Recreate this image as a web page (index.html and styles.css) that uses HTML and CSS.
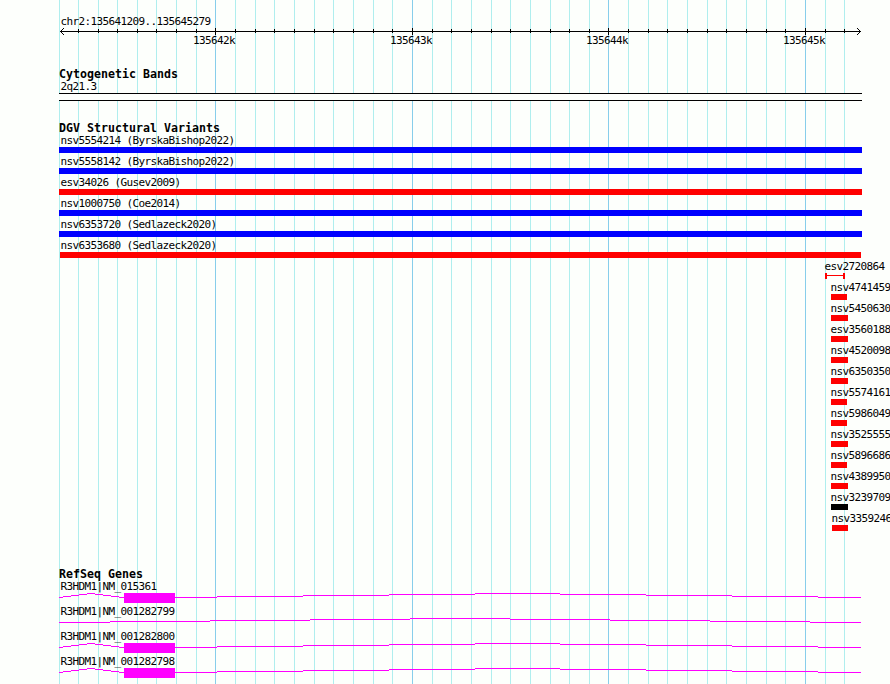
FILE: index.html
```html
<!DOCTYPE html>
<html lang="en">
<head>
    <meta charset="UTF-8">
    <title>chr2:135641209..135645279</title>
    <link rel="stylesheet" href="styles.css">
</head>
<body>
    <div class="panel">
        <!-- grid lines -->
        <svg class="grid" width="890" height="684" shape-rendering="crispEdges">
            <path class="minor" d="M59.5 0v684M78.5 0v684M98.5 0v684M117.5 0v684M137.5 0v684M156.5 0v684M176.5 0v684M196.5 0v684M235.5 0v684M255.5 0v684M274.5 0v684M294.5 0v684M314.5 0v684M333.5 0v684M353.5 0v684M373.5 0v684M392.5 0v684M432.5 0v684M451.5 0v684M471.5 0v684M491.5 0v684M510.5 0v684M530.5 0v684M550.5 0v684M569.5 0v684M589.5 0v684M628.5 0v684M648.5 0v684M667.5 0v684M687.5 0v684M707.5 0v684M726.5 0v684M746.5 0v684M766.5 0v684M785.5 0v684M825.5 0v684M844.5 0v684"/>
            <path class="major" d="M215.5 0v684M412.5 0v684M608.5 0v684M805.5 0v684"/>
        </svg>

        <div class="tracks">
            <!-- ruler -->
            <div class="ruler">
                <div class="label">chr2:135641209..135645279</div>
                <svg class="scale" width="803" height="8" shape-rendering="crispEdges">
                    <path d="M1 3.5H802M19.5 1v4M39.5 1v4M58.5 1v4M78.5 1v4M97.5 1v4M117.5 1v4M137.5 1v4M176.5 1v4M196.5 1v4M215.5 1v4M235.5 1v4M255.5 1v4M274.5 1v4M294.5 1v4M314.5 1v4M333.5 1v4M373.5 1v4M392.5 1v4M412.5 1v4M432.5 1v4M451.5 1v4M471.5 1v4M491.5 1v4M510.5 1v4M530.5 1v4M569.5 1v4M589.5 1v4M608.5 1v4M628.5 1v4M648.5 1v4M667.5 1v4M687.5 1v4M707.5 1v4M726.5 1v4M766.5 1v4M785.5 1v4"/>
                    <path d="M156.5 0v7M353.5 0v7M549.5 0v7M746.5 0v7"/>
                    <path d="M4.5 0v1M3.5 1v1M2.5 2v1M1.5 3v1M2.5 4v1M3.5 5v1M4.5 6v1M798.5 0v1M799.5 1v1M800.5 2v1M801.5 3v1M800.5 4v1M799.5 5v1M798.5 6v1"/>
                </svg>
                <div class="ticks">
                    <span>135642k</span><span>135643k</span><span>135644k</span><span>135645k</span>
                </div>
            </div>

            <div class="track bands">
                <h2>Cytogenetic Bands</h2>
                <div class="label">2q21.3</div>
                <div class="band"></div>
            </div>

            <div class="track variants">
                <h2>DGV Structural Variants</h2>
                <div class="variant gain"><div class="label">nsv5554214 (ByrskaBishop2022)</div><div class="bar"></div></div>
                <div class="variant gain"><div class="label">nsv5558142 (ByrskaBishop2022)</div><div class="bar"></div></div>
                <div class="variant loss"><div class="label">esv34026 (Gusev2009)</div><div class="bar"></div></div>
                <div class="variant gain"><div class="label">nsv1000750 (Coe2014)</div><div class="bar"></div></div>
                <div class="variant gain"><div class="label">nsv6353720 (Sedlazeck2020)</div><div class="bar"></div></div>
                <div class="variant loss inset"><div class="label">nsv6353680 (Sedlazeck2020)</div><div class="bar"></div></div>
                <div class="variant range"><div class="label">esv2720864</div><div class="whisker"></div></div>
                <div class="variant loss short narrow"><div class="label">nsv4741459</div><div class="bar"></div></div>
                <div class="variant loss short"><div class="label">nsv5450630</div><div class="bar"></div></div>
                <div class="variant loss short"><div class="label">esv3560188</div><div class="bar"></div></div>
                <div class="variant loss short"><div class="label">nsv4520098</div><div class="bar"></div></div>
                <div class="variant loss short"><div class="label">nsv6350350</div><div class="bar"></div></div>
                <div class="variant loss short narrow"><div class="label">nsv5574161</div><div class="bar"></div></div>
                <div class="variant loss short narrow"><div class="label">nsv5986049</div><div class="bar"></div></div>
                <div class="variant loss short"><div class="label">nsv3525555</div><div class="bar"></div></div>
                <div class="variant loss short narrow"><div class="label">nsv5896686</div><div class="bar"></div></div>
                <div class="variant loss short"><div class="label">nsv4389950</div><div class="bar"></div></div>
                <div class="variant complex short"><div class="label">nsv3239709</div><div class="bar"></div></div>
                <div class="variant loss short narrow last"><div class="label">nsv3359246</div><div class="bar"></div></div>
            </div>

            <div class="track genes">
                <h2>RefSeq Genes</h2>
                <div class="gene">
                    <div class="label">R3HDM1|NM_015361</div>
                    <svg width="803" height="10" shape-rendering="crispEdges">
                        <path d="M0 4.5H4M4 3.5H12M12 2.5H20M20 1.5H28M28 .5H36M36 1.5H44M44 2.5H52M52 3.5H60M60 4.5H65M116 4.5H158M158 3.5H244M244 2.5H330M330 1.5H416M416 .5H501M501 1.5H587M587 2.5H673M673 3.5H759M759 4.5H802"/>
                        <rect x="65" y="0" width="51" height="10"/>
                    </svg>
                </div>
                <div class="gene">
                    <div class="label">R3HDM1|NM_001282799</div>
                    <svg width="803" height="10" shape-rendering="crispEdges">
                        <path d="M0 4.5H51M51 3.5H151M151 2.5H251M251 1.5H351M351 .5H451M451 1.5H551M551 2.5H651M651 3.5H751M751 4.5H802"/>
                    </svg>
                </div>
                <div class="gene">
                    <div class="label">R3HDM1|NM_001282800</div>
                    <svg width="803" height="10" shape-rendering="crispEdges">
                        <path d="M0 4.5H4M4 3.5H12M12 2.5H20M20 1.5H28M28 .5H36M36 1.5H44M44 2.5H52M52 3.5H60M60 4.5H65M116 4.5H158M158 3.5H244M244 2.5H330M330 1.5H416M416 .5H501M501 1.5H587M587 2.5H673M673 3.5H759M759 4.5H802"/>
                        <rect x="65" y="0" width="51" height="10"/>
                    </svg>
                </div>
                <div class="gene">
                    <div class="label">R3HDM1|NM_001282798</div>
                    <svg width="803" height="10" shape-rendering="crispEdges">
                        <path d="M0 4.5H4M4 3.5H12M12 2.5H20M20 1.5H28M28 .5H36M36 1.5H44M44 2.5H52M52 3.5H60M60 4.5H65M116 4.5H158M158 3.5H244M244 2.5H330M330 1.5H416M416 .5H501M501 1.5H587M587 2.5H673M673 3.5H759M759 4.5H802"/>
                        <rect x="65" y="0" width="51" height="10"/>
                    </svg>
                </div>
            </div>
        </div>
    </div>
</body>
</html>
```

FILE: styles.css
```css
body {
    margin: 0;
    background-color: #fdfffc;
    color: #000;
    font-family: "DejaVu Sans Mono", monospace;
    font-size: 11px;
    line-height: 13px;
    letter-spacing: -0.62px;
}
.panel {
    position: relative;
    width: 890px;
    height: 684px;
    overflow: hidden;
}
svg {
    display: block;
}
.grid {
    position: absolute;
    top: 0;
    left: 0;
    fill: none;
}
.minor {
    stroke: #afeeee;
}
.major {
    stroke: #87ceeb;
}
.tracks {
    position: relative;
    margin-left: 59px;
    padding-top: 15px;
}
.label {
    height: 13px;
    padding-left: 1.4px;
    white-space: nowrap;
}
h2 {
    margin: 0;
    height: 12px;
    font-size: 11.6px;
    font-weight: bold;
    letter-spacing: 0.02px;
}
/* ruler */
.ruler {
    height: 53px;
}
.scale {
    fill: none;
    stroke: #000;
}
.ticks {
    display: grid;
    grid-template-columns: 197px 196px 197px 42px;
    margin-top: -2px;
    padding-left: 134px;
}
/* cytogenetic band */
.bands {
    height: 54px;
}
.band {
    height: 6px;
    width: 803px;
    border-top: 1px solid #000;
    border-bottom: 1px solid #000;
    background-color: #fdfffc;
}
/* structural variants */
.variants {
    height: 446px;
}
.variant {
    height: 21px;
}
.bar {
    width: 803px;
    height: 6px;
}
.gain .bar {
    background-color: #00f;
}
.loss .bar {
    background-color: #f00;
}
.complex .bar {
    background-color: #000;
}
.inset .bar {
    width: 801px;
    margin-left: 1px;
}
.range {
    padding-left: 764px;
}
.whisker {
    box-sizing: border-box;
    width: 20px;
    height: 6px;
    margin-left: 2px;
    border: solid #f00;
    border-width: 0 2px;
    background: linear-gradient(#f00, #f00) 0 2px / 100% 1px no-repeat;
}
.short {
    padding-left: 770px;
}
.short .bar {
    width: 17px;
    margin-left: 2px;
}
.narrow .bar {
    width: 16px;
}
.last {
    padding-left: 771px;
}
/* genes */
.gene {
    height: 25px;
}
.gene svg {
    fill: none;
    stroke: #f0f;
}
.gene rect {
    fill: #f0f;
    stroke: none;
}
```
